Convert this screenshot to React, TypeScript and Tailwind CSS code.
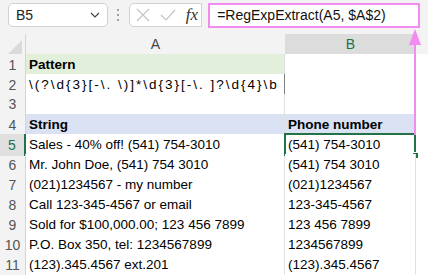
import React from "react";

type Row = { n: number; a: string; b: string; kind?: "pattern" | "head" };

const rows: Row[] = [
  { n: 1, a: "Pattern", b: "", kind: "pattern" },
  { n: 2, a: "\\(?\\d{3}[-\\. \\)]*\\d{3}[-\\. ]?\\d{4}\\b", b: "" },
  { n: 3, a: "", b: "" },
  { n: 4, a: "String", b: "Phone number", kind: "head" },
  { n: 5, a: "Sales - 40% off! (541) 754-3010", b: "(541) 754-3010" },
  { n: 6, a: "Mr. John Doe, (541) 754 3010", b: "(541) 754 3010" },
  { n: 7, a: "(021)1234567 - my number", b: "(021)1234567" },
  { n: 8, a: "Call 123-345-4567 or email", b: "123-345-4567" },
  { n: 9, a: "Sold for $100,000.00; 123 456 7899", b: "123 456 7899" },
  { n: 10, a: "P.O. Box 350, tel: 1234567899", b: "1234567899" },
  { n: 11, a: "(123).345.4567 ext.201", b: "(123).345.4567" },
];

const cellFont = { fontFamily: '"Liberation Sans", Arial, sans-serif' };

function App() {
  return (
    <div
      className="relative h-[275px] w-[428px] overflow-hidden bg-[#f3f3f3] text-[13.5px] text-black"
      style={cellFont}
    >
      {/* Formula bar */}
      <div className="flex h-[34px] items-start gap-0 px-[8px] pt-[3px]">
        <div className="flex h-[24px] w-[101px] items-center justify-between rounded-[5px] border border-[#d1d1d1] bg-white pl-[7px] pr-[6px] text-[14px] text-[#222]">
          <span>B5</span>
          <svg width="12" height="12" viewBox="0 0 12 12" fill="none" stroke="#444" strokeWidth="1.2">
            <path d="M2 4l4 4 4-4" />
          </svg>
        </div>
        <div className="flex h-[24px] w-[21px] flex-col items-center justify-center gap-[3px]">
          <span className="h-[2px] w-[2px] rounded-full bg-[#888]" />
          <span className="h-[2px] w-[2px] rounded-full bg-[#888]" />
          <span className="h-[2px] w-[2px] rounded-full bg-[#888]" />
        </div>
        <div className="flex h-[24px] w-[74px] items-center gap-[10px] rounded-l-[5px] border border-[#d1d1d1] bg-white pl-[6px]">
          <svg width="14" height="14" viewBox="0 0 14 14" fill="none" stroke="#c4c4c4" strokeWidth="1.2">
            <path d="M1 1l12 12M13 1L1 13" />
          </svg>
          <svg width="16" height="12" viewBox="0 0 16 12" fill="none" stroke="#c4c4c4" strokeWidth="1.2">
            <path d="M1 6l5 5L15 1" />
          </svg>
          <span
            className="text-[17px] italic text-[#333]"
            style={{ fontFamily: '"Liberation Serif", "Times New Roman", serif' }}
          >
            fx
          </span>
        </div>
        <div className="ml-[6px] flex h-[25px] w-[214px] items-center border-2 border-[#f28cf0] bg-white pl-[7px] text-[14px] text-[#111]">
          =RegExpExtract(A5, $A$2)
        </div>
      </div>

      {/* Column headers */}
      <div className="grid h-[20px] grid-cols-[26px_259px_131px_12px] text-[14px] text-[#444]">
        <div className="relative border-r border-[#d4d4d4]">
          <svg className="absolute bottom-[3px] right-[3px]" width="14" height="14" viewBox="0 0 14 14">
            <path d="M14 0V14H0Z" fill="#dadada" />
          </svg>
        </div>
        <div className="flex items-end justify-center border-b border-[#d4d4d4] pb-[1px]">A</div>
        <div className="flex items-end justify-center border-b-2 border-[#217346] bg-[#dcdcdc] text-[#217346]">B</div>
        <div className="border-b border-[#d4d4d4]" />
      </div>

      {/* Rows */}
      {rows.map((r) => {
        const sel = r.n === 5;
        const aBg =
          r.kind === "pattern" ? "bg-[#e2efda]" : r.kind === "head" ? "bg-[#d9e1f2]" : "bg-white";
        const bBg = r.kind === "head" ? "bg-[#d9e1f2]" : "bg-white";
        const boxed = r.n === 1 || r.n === 2;
        return (
          <div key={r.n} className="grid h-[20px] grid-cols-[26px_259px_131px_12px]">
            <div
              className={`flex items-center justify-center text-[14px] ${
                sel
                  ? "border-r-2 border-[#217346] bg-[#e0e0e0] text-[#217346]"
                  : "border-r border-[#d4d4d4] text-[#555]"
              }`}
            >
              {r.n}
            </div>
            <div
              className={`flex items-center overflow-visible whitespace-nowrap pl-[3px] pt-[1px] ${aBg} ${
                boxed ? "border-r border-[#7f7f7f]" : "border-r border-[#e1e1e1]"
              } ${r.n === 2 ? "border-b border-[#7f7f7f] tracking-[2px]" : "border-b border-[#e1e1e1]"} ${
                r.kind ? "font-bold" : ""
              }`}
            >
              {r.a}
            </div>
            <div
              className={`relative flex items-center whitespace-nowrap border-b border-r border-[#e1e1e1] pl-[3px] pt-[1px] ${bBg} ${
                r.kind ? "font-bold" : ""
              }`}
            >
              {r.b}
              {sel && (
                <>
                  <div className="absolute -left-[1px] -top-[1px] bottom-[-1px] right-[-1px] border-2 border-[#217346]" />
                  <div className="absolute -bottom-[4px] -right-[4px] h-[7px] w-[7px] border border-white bg-[#217346]" />
                </>
              )}
            </div>
            <div className="border-b border-[#e1e1e1] bg-white" />
          </div>
        );
      })}

      {/* Annotation arrow */}
      <svg className="absolute left-[408px] top-[29px]" width="14" height="106" viewBox="0 0 14 106">
        <path d="M7 14V106" stroke="#f28cf0" strokeWidth="2" />
        <path d="M7 0L13 16H1Z" fill="#f28cf0" />
      </svg>
    </div>
  );
}

export default App;
